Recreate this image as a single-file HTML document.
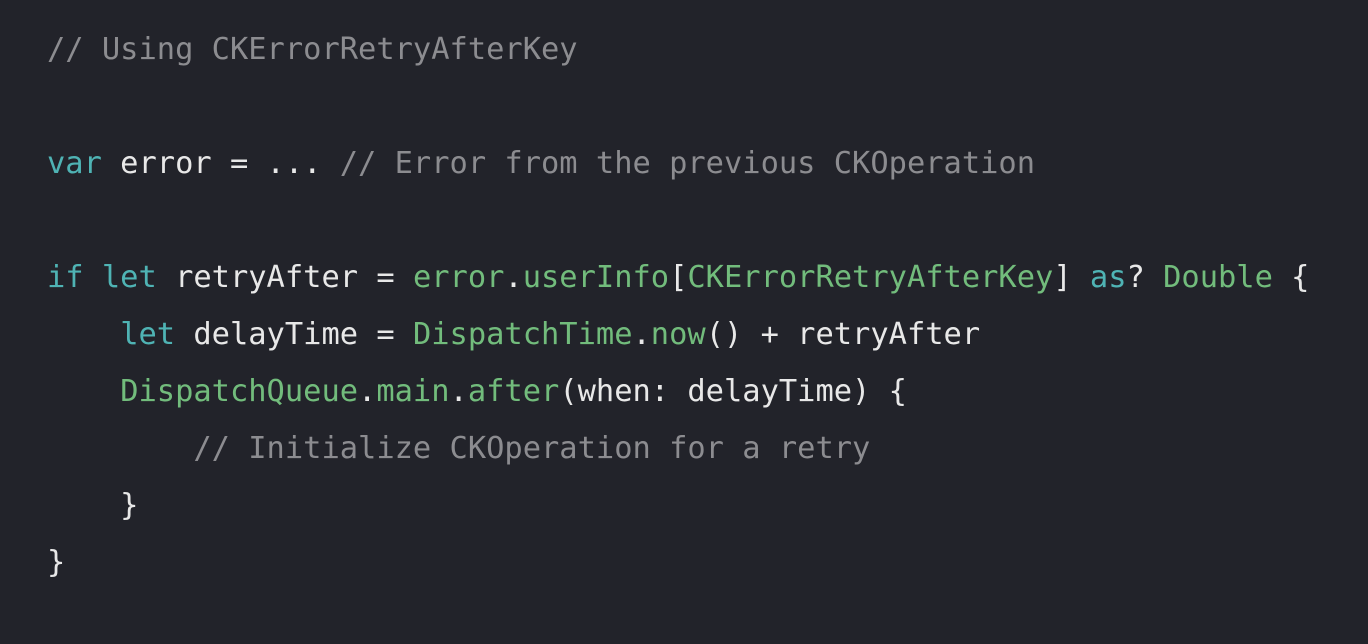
<!DOCTYPE html>
<html><head><style>
html,body{margin:0;padding:0;background:#22232a;width:1368px;height:644px;overflow:hidden}
pre{position:absolute;left:47px;top:22px;margin:0;font-family:"DejaVu Sans Mono","Liberation Mono",monospace;font-size:30.4px;line-height:56.95px;color:#e8e8e8}
.k{color:#4fb3b4}.g{color:#72bc7c}.c{color:#8c8c90}
</style></head><body>
<pre><span class="c">// Using CKErrorRetryAfterKey</span>

<span class="k">var</span> error = ... <span class="c">// Error from the previous CKOperation</span>

<span class="k">if let</span> retryAfter = <span class="g">error</span>.<span class="g">userInfo</span>[<span class="g">CKErrorRetryAfterKey</span>] <span class="k">as</span>? <span class="g">Double</span> {
    <span class="k">let</span> delayTime = <span class="g">DispatchTime</span>.<span class="g">now</span>() + retryAfter
    <span class="g">DispatchQueue</span>.<span class="g">main</span>.<span class="g">after</span>(when: delayTime) {
        <span class="c">// Initialize CKOperation for a retry</span>
    }
}</pre>
</body></html>
